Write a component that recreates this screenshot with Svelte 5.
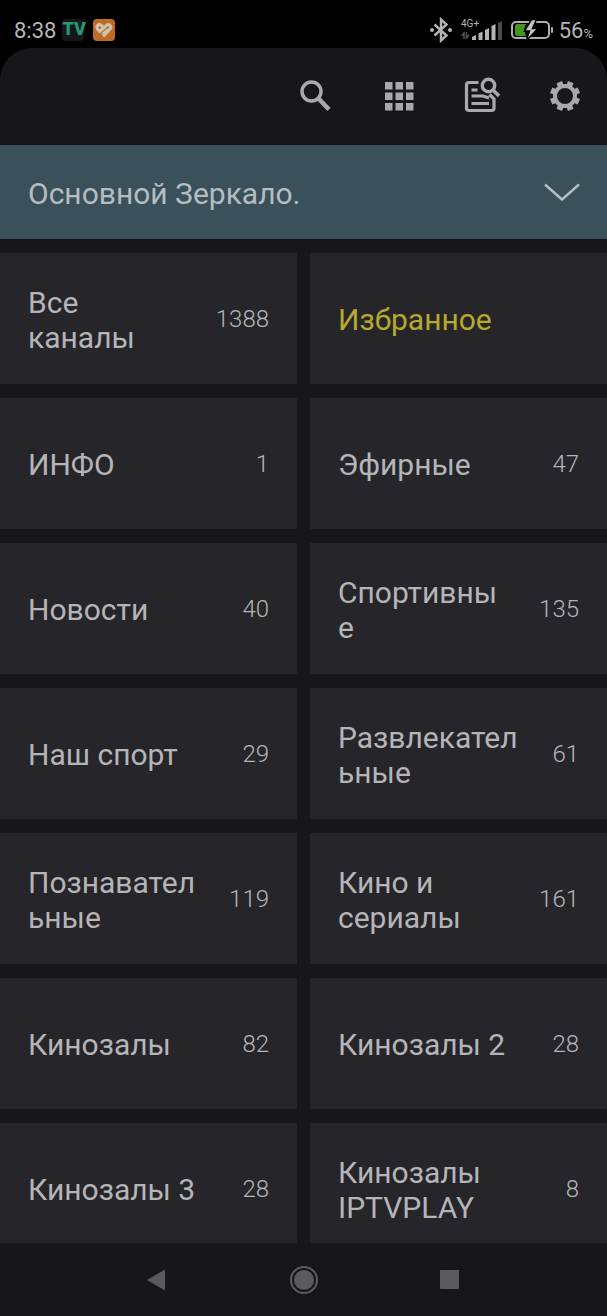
<script>
  let groups = [
    { name: "Все каналы", count: 1388 },
    { name: "Избранное", favorite: true },
    { name: "ИНФО", count: 1 },
    { name: "Эфирные", count: 47 },
    { name: "Новости", count: 40 },
    { name: "Спортивные", count: 135 },
    { name: "Наш спорт", count: 29 },
    { name: "Развлекательные", count: 61 },
    { name: "Познавательные", count: 119 },
    { name: "Кино и сериалы", count: 161 },
    { name: "Кинозалы", count: 82 },
    { name: "Кинозалы 2", count: 28 },
    { name: "Кинозалы 3", count: 28 },
    { name: "Кинозалы IPTVPLAY", count: 8 },
  ];

  const teeth = [0, 45, 90, 135, 180, 225, 270, 315];
</script>

<div class="screen">
  <div class="status-bar">
    <span class="time">8:38</span>
    <span class="tv-badge">TV</span>
    <svg class="app-badge" width="22" height="22" viewBox="0 0 22 22">
      <rect width="22" height="22" rx="4" fill="#bd6c28" />
      <g fill="none" stroke="#d3c4b0" stroke-linecap="round">
        <path d="M10.5 8.5L8.5 6.5A2.6 2.6 0 0 0 4.500 10L6 11.500" stroke-width="3" />
        <path d="M6.500 12.500L13.500 6.500A2.400 2.400 0 0 1 17 10L11 16.500" stroke-width="3" />
        <path d="M9.500 14.500L14 10.500" stroke-width="2" />
      </g>
      <path d="M7.500 14.500L14.500 8.500" stroke="#bd6c28" stroke-width="1" />
    </svg>

    <div class="status-right">
      <svg width="24" height="26" viewBox="0 0 24 26">
        <path
          d="M5.500 7.500L17.500 18.500L12 23.500V2.500L17.500 7.500L5.500 18.500"
          fill="none"
          stroke="#b4b4b4"
          stroke-width="2.400"
        />
        <circle cx="3" cy="13" r="2" fill="#b4b4b4" />
        <circle cx="21" cy="13" r="2" fill="#b4b4b4" />
      </svg>
      <svg class="signal" width="42" height="24" viewBox="0 0 42 24">
        <text x="0" y="9" class="network">4G+</text>
        <path
          d="M3 21V15L0.500 18M5.500 14V20L8 17"
          fill="none"
          stroke="#555"
          stroke-width="1.500"
        />
        <g fill="#b4b4b4">
          <path d="M11 19l4-2v5h-4z" />
          <path d="M17.500 15.500l4-2v8.500h-4z" />
          <path d="M24 12l4-2v12h-4z" />
          <path d="M30.500 8l4-2v16h-4z" />
        </g>
        <path d="M37 5l4-2v19h-4z" fill="#4a4a4a" />
      </svg>
      <svg class="battery" width="43" height="22" viewBox="0 0 43 22">
        <rect
          x="1"
          y="3"
          width="37"
          height="16"
          rx="4"
          fill="none"
          stroke="#b0b0b0"
          stroke-width="2"
        />
        <path d="M6 5H15L13 10L15 17H6A2 2 0 0 1 4 15V7A2 2 0 0 1 6 5Z" fill="#42941c" />
        <path
          d="M20.500 0.500L13.500 12H18.500L15 22L27 9.500H21.500L25.500 0.500Z"
          fill="#c4c4c4"
          stroke="#000"
          stroke-width="1.500"
        />
        <rect x="40" y="8" width="2" height="6" rx="1" fill="#b0b0b0" />
      </svg>
      <span class="level">56<small>%</small></span>
    </div>
  </div>

  <main class="app">
    <header class="toolbar">
      <button aria-label="Поиск">
        <svg width="48" height="48" viewBox="0 0 48 48" fill="none" stroke="#a9a9ac">
          <circle cx="19.500" cy="19.500" r="9.500" stroke-width="3.500" />
          <path d="M26.500 26.500L37 37.500" stroke-width="4.500" />
        </svg>
      </button>
      <button aria-label="Сетка">
        <svg width="48" height="48" viewBox="0 0 48 48" fill="#a9a9ac">
          {#each [10, 20.5, 31] as y}
            {#each [10, 20.5, 31] as x}
              <rect {x} {y} width="7.500" height="7.500" />
            {/each}
          {/each}
        </svg>
      </button>
      <button aria-label="Программа передач">
        <svg width="48" height="48" viewBox="0 0 48 48" fill="none" stroke="#a9a9ac">
          <path
            d="M20.500 10.500H11A2.500 2.500 0 0 0 8.500 13V36A2.500 2.500 0 0 0 11 38.500H33.500A2.500 2.500 0 0 0 36 36V27L31.500 22.500"
            stroke-width="3.200"
          />
          <path d="M13.500 18H19.500M13.500 24H25L31 26M13.500 31.500H31" stroke-width="3.200" />
          <circle cx="30.500" cy="13.500" r="6.200" stroke-width="3.400" />
          <path d="M34.500 17.500L41 24" stroke-width="3.600" />
        </svg>
      </button>
      <button aria-label="Настройки">
        <svg width="48" height="48" viewBox="0 0 48 48">
          <circle cx="24" cy="24" r="10" fill="none" stroke="#a9a9ac" stroke-width="4" />
          {#each teeth as angle}
            <path
              d="M21.500 13L21.500 9.500H26.500L26.500 13Z"
              fill="#a9a9ac"
              stroke="#a9a9ac"
              transform="rotate({angle + 22.5} 24 24)"
            />
          {/each}
        </svg>
      </button>
    </header>

    <button class="playlist">
      <span>Основной Зеркало.</span>
      <svg width="36" height="20" viewBox="0 0 36 20">
        <path d="M1 1.500L18 16.500L35 1.500" fill="none" stroke="#b4bdc1" stroke-width="2.500" />
      </svg>
    </button>

    <div class="groups">
      {#each groups as group}
        <button class="group" class:favorite={group.favorite}>
          <span class="name">{group.name}</span>
          {#if group.count}
            <span class="count">{group.count}</span>
          {/if}
        </button>
      {/each}
    </div>
  </main>

  <nav class="system-nav">
    <button aria-label="Назад">
      <svg width="48" height="48" viewBox="0 0 48 48">
        <path d="M13 24L31 13.500V34.500Z" fill="#5b5a5f" />
      </svg>
    </button>
    <button aria-label="Домой">
      <svg width="48" height="48" viewBox="0 0 48 48">
        <circle cx="24" cy="24" r="10" fill="#5b5a5f" />
        <circle cx="24" cy="24" r="13" fill="none" stroke="#5b5a5f" stroke-width="2" />
      </svg>
    </button>
    <button aria-label="Недавние">
      <svg width="48" height="48" viewBox="0 0 48 48">
        <rect x="14" y="14" width="19" height="19" rx="1" fill="#5b5a5f" />
      </svg>
    </button>
  </nav>
</div>

<style>
  :global(body) {
    background: #000;
  }

  .screen {
    display: flex;
    flex-direction: column;
    height: 100vh;
    background: #000;
    color: #b5b5b8;
    font-family: Roboto, "Noto Sans", sans-serif;
  }

  button {
    margin: 0;
    padding: 0;
    border: none;
    background: none;
    color: inherit;
    font: inherit;
    text-align: left;
    cursor: pointer;
  }

  svg {
    display: block;
    flex: none;
  }

  .status-bar {
    display: flex;
    align-items: center;
    flex: none;
    height: 48px;
    padding: 12px 14px 0;
    box-sizing: border-box;
  }

  .time {
    font-size: 22px;
  }

  .tv-badge {
    width: 22px;
    height: 22px;
    margin-left: 6px;
    border-radius: 4px;
    background: #15171a;
    color: #239a78;
    font-size: 18px;
    font-weight: 900;
    line-height: 20px;
    text-align: center;
  }

  .app-badge {
    margin-left: 9px;
  }

  .status-right {
    display: flex;
    align-items: center;
    margin-left: auto;
  }

  .signal {
    margin-left: 8px;
  }

  .network {
    fill: #b4b4b4;
    font-size: 10px;
  }

  .battery {
    margin-left: 8px;
  }

  .level {
    margin-left: 5px;
    font-size: 22px;
  }

  .level small {
    font-size: 13px;
  }

  .app {
    display: flex;
    flex: 1;
    flex-direction: column;
    min-height: 0;
    border-radius: 32px 32px 0 0;
    background: #17161b;
    overflow: hidden;
  }

  .toolbar {
    display: flex;
    align-items: center;
    justify-content: flex-end;
    flex: none;
    gap: 35px;
    height: 97px;
    padding: 0 18px 2px 0;
    box-sizing: border-box;
  }

  .playlist {
    display: flex;
    align-items: center;
    justify-content: space-between;
    flex: none;
    height: 94px;
    padding: 2px 27px 0 28px;
    box-sizing: border-box;
    background: #3a505a;
    color: #b4bdc1;
    font-size: 30px;
  }

  .groups {
    display: grid;
    grid-template-columns: 1fr 1fr;
    grid-auto-rows: minmax(131px, auto);
    gap: 14px 13px;
    padding-top: 14px;
    min-height: 0;
    overflow: hidden;
  }

  .group {
    display: flex;
    align-items: center;
    gap: 28px;
    min-width: 0;
    padding: 6px 28px 4px;
    background: #26252a;
  }

  .name {
    flex: 1;
    min-width: 0;
    font-size: 30px;
    line-height: 35px;
    overflow-wrap: anywhere;
  }

  .favorite {
    color: #b5aa2e;
  }

  .count {
    font-size: 24px;
    font-weight: 300;
    line-height: 35px;
  }

  .system-nav {
    display: flex;
    align-items: center;
    justify-content: center;
    flex: none;
    gap: 98px;
    height: 73px;
    background: #17161b;
  }
</style>
